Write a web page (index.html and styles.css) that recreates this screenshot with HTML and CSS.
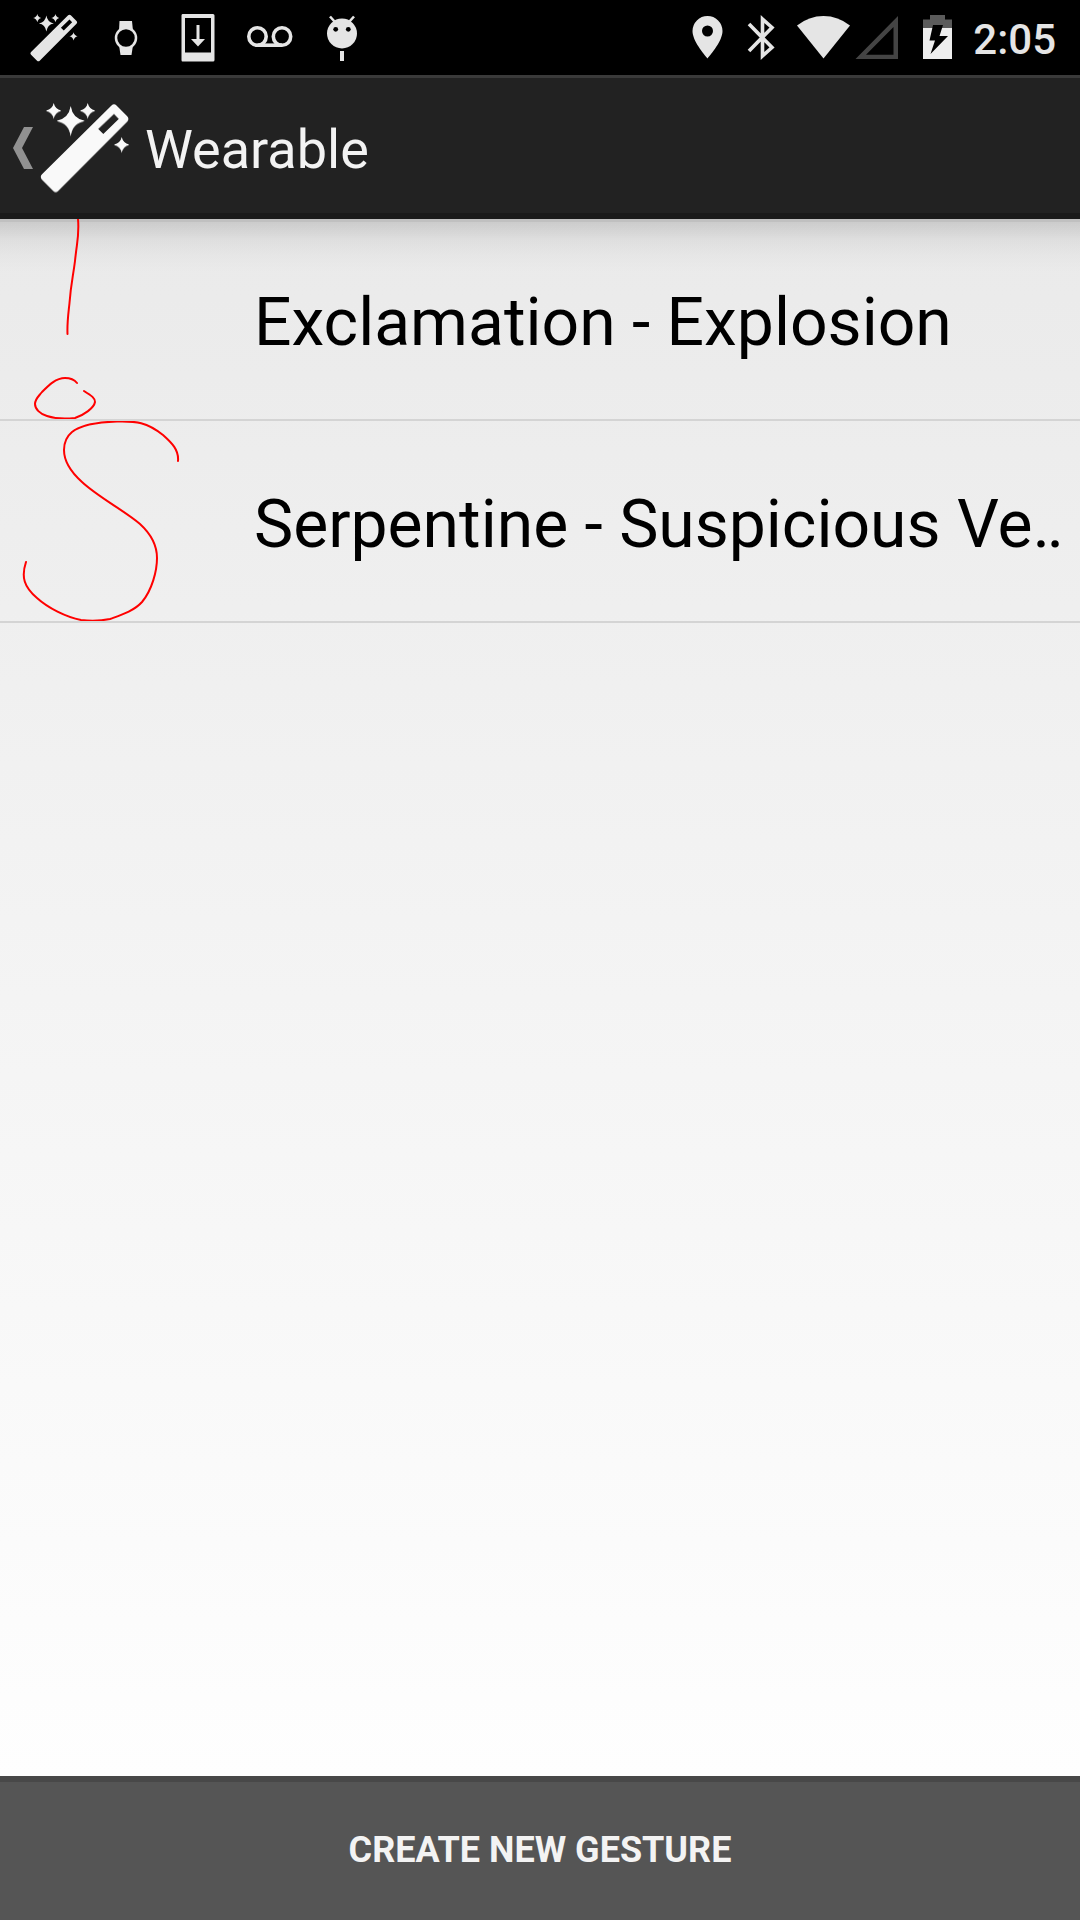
FILE: index.html
```
<!DOCTYPE html>
<html lang="en">
<head>
<meta charset="utf-8">
<meta name="viewport" content="width=device-width, initial-scale=1">
<title>Wearable</title>
<link rel="stylesheet" href="styles.css">
</head>
<body>
<svg class="defs" aria-hidden="true">
  <symbol id="wand" viewBox="0 0 90 90">
    <path fill-rule="evenodd" d="M71.500 2.400Q74 0 76.500 2.400L87.200 13.200Q89.500 15.700 87.200 18.200L18.200 87.500Q15.700 90 13.200 87.500L2 76.200Q-.4 73.700 2 71.200ZM74 10.500L58 25.700L63.300 31L79 15.700Z"/>
    <path d="M30.700 3Q32.500 15.500 44.700 17.700Q32.500 19.500 30.700 33Q28.800 19.500 16.700 17.700Q28.800 15.500 30.700 3ZM13.700 0Q15 6 21.200 7.500Q15 9 13.700 15.500Q12.500 9 6 7.500Q12.500 6 13.700 0ZM47.700 0Q49 6 55.200 7.500Q49 9 47.700 15.500Q46.500 9 40 7.500Q46.500 6 47.700 0ZM81.700 34Q83 40 89.200 41.500Q83 43 81.700 49.500Q80.500 43 74 41.500Q80.500 40 81.700 34Z"/>
  </symbol>
</svg>

<div class="status-bar">
  <div class="status-group notifications">
    <svg class="slot" viewBox="0 0 72 75"><use href="#wand" x="12" y="14" width="48" height="48"/></svg>
    <svg class="slot" viewBox="90 0 72 75">
      <path d="M119.500 21H132L133 31H119ZM119 45H133L131.500 55H120.500Z"/>
      <circle cx="126" cy="38" r="10" fill="#000" stroke="#e5e5e5" stroke-width="2.500"/>
    </svg>
    <svg class="slot" viewBox="162 0 72 75">
      <path fill-rule="evenodd" d="M182.500 14H213Q214.500 14 214.500 15.500V60Q214.500 61.500 213 61.500H182.500Q181.500 61.500 181.500 60V15.500Q181.500 14 182.500 14ZM185 18V52.500H211V18Z"/>
      <path d="M196.500 25H199.500V39H205L198 46.500L191 39H196.500Z"/>
    </svg>
    <svg class="slot" viewBox="234 0 72 75">
      <g fill="none" stroke="#e5e5e5" stroke-width="3.600"><circle cx="257.500" cy="36.500" r="8.700"/><circle cx="282" cy="36.500" r="8.700"/><path d="M257.500 45.200H282"/></g>
    </svg>
    <svg class="slot" viewBox="306 0 72 75">
      <circle cx="342" cy="33.500" r="15"/>
      <path d="M330 16.500L335 22M354 16.500L349 22" stroke="#e5e5e5" stroke-width="2.600"/>
      <path d="M340 51H344V61H340Z"/>
      <circle cx="335.700" cy="29.300" r="2.400" fill="#000"/><circle cx="348.300" cy="29.300" r="2.400" fill="#000"/>
    </svg>
  </div>
  <div class="status-group system">
    <svg class="sys" viewBox="680 0 54 75">
      <path fill-rule="evenodd" d="M707.500 16A15 15 0 0 1 722.500 31C722.500 41 711 54 707.500 58.500C704 54 692.500 41 692.500 31A15 15 0 0 1 707.500 16ZM707.500 25.500A5.500 5.500 0 1 0 707.500 36.500A5.500 5.500 0 1 0 707.500 25.500Z"/>
    </svg>
    <svg class="sys" viewBox="734 0 54 75">
      <path d="M749 24L772 47.500L762.500 56V19L772 27.500L749 51" fill="none" stroke="#e5e5e5" stroke-width="3.600"/>
    </svg>
    <svg class="sys wide" viewBox="788 0 66 75">
      <path d="M797 25.500Q809 16 823.500 16T850 25.500L823.500 58.500Z"/>
    </svg>
    <svg class="sys" viewBox="854 0 54 75">
      <path d="M898 16V59H855.500ZM893.500 27L866 54.700H893.500Z" fill="#444" fill-rule="evenodd"/>
    </svg>
    <svg class="sys battery" viewBox="908 0 65 75">
      <path d="M923 28V19.500H930V15H945V19.500H952V28Z" fill="#5b5b5b"/>
      <path d="M923 28H952V59H923Z" fill="#eee"/>
      <path d="M933 25H943L939.500 36H948L930.500 54L935 40.500H929.500Z" fill="#000"/>
    </svg>
    <time class="clock">2:05</time>
  </div>
</div>

<header class="action-bar">
  <a class="up" href="#" aria-label="Navigate up">
    <svg class="chevron" viewBox="0 0 22 42"><path d="M11 0H20L9 21L20 42H11L0 21Z"/></svg>
    <svg class="app-icon" viewBox="0 0 90 90"><use href="#wand" width="90" height="90"/></svg>
  </a>
  <h1 class="title">Wearable</h1>
</header>

<main class="content">
  <ul class="gestures">
    <li class="gesture">
      <svg class="drawing" viewBox="0 0 200 200"><path d="M78 0C79.500 16 77 22 75 42C73 58 71 64 69.500 84C68 98 67 104 67.500 115M84 172C92 177 95 179 95 183C94 189 84 196 75 199C66 200 56 200 47 197C40 195 35 190 35 185C35 180 38 178 42 173C49 166 56 159 65 159Q73 159 77 164"/></svg>
      <span class="name">Exclamation - Explosion</span>
    </li>
    <li class="gesture">
      <svg class="drawing" viewBox="0 0 200 200"><path d="M178 40C179 29 172 22 163 14C147 1 136 0 117 .5C101 1 82 3 72 11C66 16 64 22 64 29C64 40 72 52 82 61C98 76 125 90 140 103C152 114 157 124 157 137C157 150 152 169 142 181C134 190 121 194 110 198C100 200 90 200 81 199C66 196 48 187 37 177C24 166 21 156 26 141"/></svg>
      <span class="name">Serpentine - Suspicious Ve‥</span>
    </li>
  </ul>
</main>

<button class="create" type="button">CREATE NEW GESTURE</button>
</body>
</html>
```
FILE: styles.css
```
* {
  box-sizing: border-box;
}

body {
  margin: 0;
  min-height: 100vh;
  display: flex;
  flex-direction: column;
  font-family: Roboto, sans-serif;
  background: #fff;
}

.defs {
  position: absolute;
  width: 0;
  height: 0;
}

svg {
  display: block;
  flex: none;
}

.status-bar {
  height: 75px;
  padding: 0 24px 0 18px;
  display: flex;
  justify-content: space-between;
  background: #000;
  color: #e5e5e5;
  fill: #e5e5e5;
}

.status-group {
  display: flex;
  align-items: center;
}

.slot {
  width: 72px;
  height: 75px;
}

.sys {
  width: 54px;
  height: 75px;
}

.wide {
  width: 66px;
}

.battery {
  width: 65px;
}

.clock {
  font-size: 42px;
  line-height: 48px;
  font-weight: 500;
  padding-top: 4px;
}

.action-bar {
  height: 144px;
  padding: 4px 0 0 13px;
  display: flex;
  align-items: center;
  gap: 15px;
  background: #222;
  border-top: 3px solid #3a3a3a;
  border-bottom: 6px solid #1a1a1a;
}

.up {
  display: flex;
  align-items: center;
  gap: 5px;
}

.chevron {
  width: 22px;
  height: 42px;
  fill: #919191;
}

.app-icon {
  width: 90px;
  height: 90px;
  overflow: visible;
  fill: #f9f9f9;
  filter: drop-shadow(0 1px 0 #888);
}

.title {
  margin: 0;
  padding-top: 4px;
  font-size: 54px;
  line-height: 64px;
  font-weight: 400;
  color: #f3f3f3;
}

.content {
  flex: 1;
  background:
    linear-gradient(rgba(0, 0, 0, 0.18) 3px, rgba(0, 0, 0, 0.13) 3px, rgba(0, 0, 0, 0.05) 21px, rgba(0, 0, 0, 0.02) 36px, transparent 54px),
    linear-gradient(#eaeaea, #fefefe);
}

.gestures {
  list-style: none;
  margin: 0;
  padding: 0;
}

.gesture {
  display: flex;
  align-items: center;
  gap: 54px;
  border-bottom: 2px solid #d4d4d4;
}

.drawing {
  width: 200px;
  height: 200px;
  fill: none;
  stroke: #f00;
  stroke-width: 2;
  stroke-linecap: round;
}

.name {
  flex: 1;
  min-width: 0;
  padding-top: 8px;
  font-size: 66px;
  line-height: 78px;
  white-space: nowrap;
  overflow: hidden;
  color: #000;
}

.create {
  height: 144px;
  padding: 0 0 2px;
  border: 0;
  border-top: 6px solid #484848;
  background: #555;
  color: #f3f3f3;
  font: 700 36px/42px Roboto, sans-serif;
}
```
